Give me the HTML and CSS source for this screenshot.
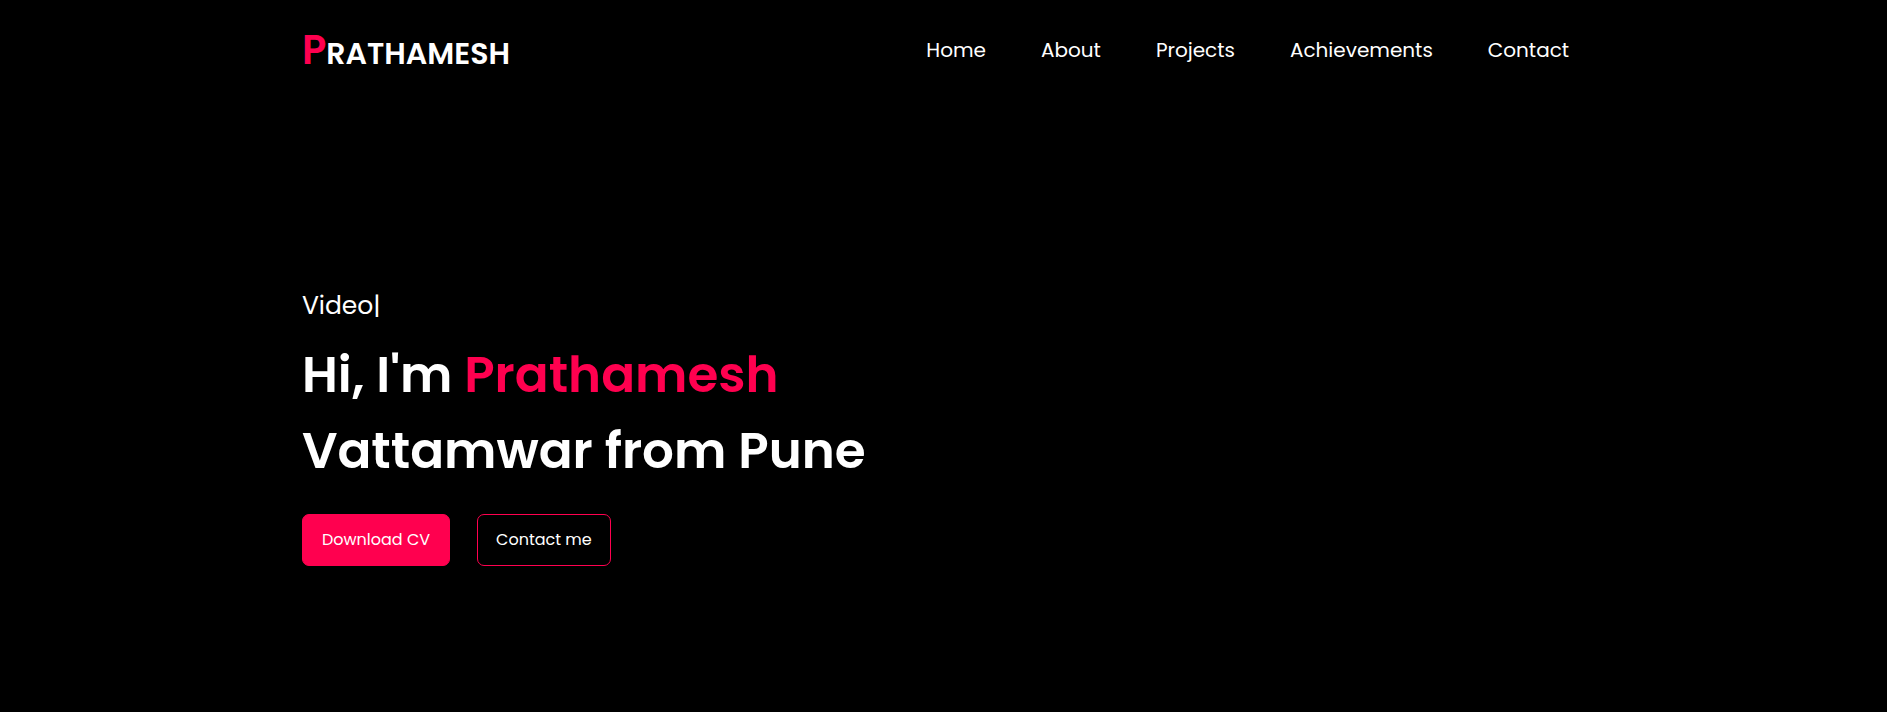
FILE: index.html
```html
<!DOCTYPE html>
<html lang="en">
<head>
<meta charset="utf-8">
<meta name="viewport" content="width=device-width, initial-scale=1">
<title>Prathamesh</title>
<link rel="stylesheet" href="styles.css">
</head>
<body>
<header class="header">
  <a class="logo" href="#"><span class="logo-initial">P</span>RATHAMESH</a>
  <nav class="nav">
    <a href="#home">Home</a>
    <a href="#about">About</a>
    <a href="#projects">Projects</a>
    <a href="#achievements">Achievements</a>
    <a href="#contact">Contact</a>
  </nav>
</header>
<main class="hero" id="home">
  <p class="role">Video|</p>
  <h1 class="title">Hi, I'm <span class="accent">Prathamesh</span><br>Vattamwar from Pune</h1>
  <div class="actions">
    <button class="button button-filled" type="button">Download CV</button>
    <button class="button" type="button">Contact me</button>
  </div>
</main>
</body>
</html>
```

FILE: styles.css
```css
* {
  box-sizing: border-box;
  margin: 0;
  padding: 0;
}

body {
  background: #000;
  color: #fff;
  font-family: Poppins, Inter, sans-serif;
}

.header {
  display: flex;
  justify-content: space-between;
  align-items: flex-start;
  padding: 30px 16%;
}

.logo {
  color: #fff;
  font-size: 30px;
  font-weight: 600;
  line-height: 40px;
  text-decoration: none;
}

.logo-initial {
  color: #ff004f;
  font-size: 40px;
}

.nav {
  display: flex;
  gap: 55px;
  padding-right: 16px;
}

.nav a {
  color: #fff;
  font-size: 20px;
  line-height: 40px;
  text-decoration: none;
}

.hero {
  padding: 182px 16% 60px;
}

.role {
  font-size: 25px;
  line-height: 40px;
}

.title {
  margin-top: 11px;
  font-size: 50px;
  font-weight: 600;
  line-height: 76px;
}

.accent {
  color: #ff004f;
}

.actions {
  display: flex;
  gap: 27px;
  margin-top: 25px;
}

.button {
  padding: 13px 18px;
  border: 1px solid #ff004f;
  border-radius: 7px;
  background: transparent;
  color: #fff;
  font-family: inherit;
  font-size: 16px;
  line-height: 24px;
}

.button-filled {
  padding: 13px 19px;
  background: #ff004f;
}
```
